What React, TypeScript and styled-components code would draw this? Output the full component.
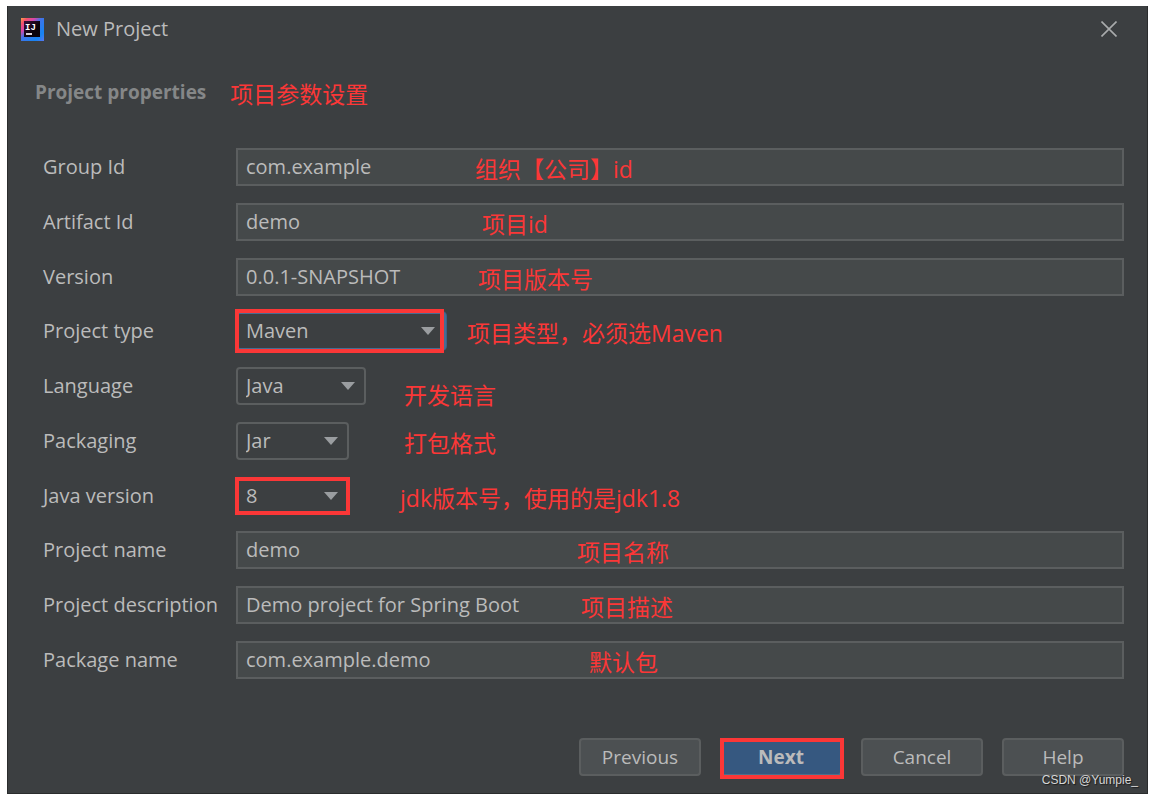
import React, { useId } from "react";
import styled, { createGlobalStyle, css } from "styled-components";

const uiFont = `"Open Sans", "Noto Sans", "Noto Sans CJK SC", sans-serif`;
const noteFont = `"Open Sans", "Noto Sans CJK SC", sans-serif`;

const GlobalStyle = createGlobalStyle`
  *, *::before, *::after { box-sizing: border-box; }
  body {
    margin: 0;
    background: #ffffff;
    color: #bbbbbb;
    font-family: ${uiFont};
    font-size: 20px;
    line-height: 26px;
  }
  button, input, select { font: inherit; color: inherit; margin: 0; }
`;

const Page = styled.div`
  display: flex;
  min-height: 100vh;
  padding: 6px 6px 3px 7px;
`;

const Dialog = styled.main`
  position: relative;
  flex: 1;
  min-width: 0;
  display: flex;
  flex-direction: column;
  background: #3c3f41;
  border: 1px solid #2a2c2d;
  border-top: 0;
`;

const TitleBar = styled.header`
  display: flex;
  align-items: center;
  gap: 12px;
  height: 46px;
  padding: 0 30px 0 13px;
`;

const Title = styled.h1`
  flex: 1;
  margin: 0;
  font-size: 20px;
  font-weight: 400;
`;

const CloseButton = styled.button`
  display: flex;
  padding: 0;
  border: 0;
  background: none;
  cursor: pointer;
`;

const Section = styled.div`
  display: flex;
  align-items: center;
  gap: 24px;
  height: 80px;
  padding-left: 27px;
`;

const SectionTitle = styled.h2`
  margin: 0;
  color: #858788;
  font-size: 19px;
  font-weight: 700;
`;

const noteText = css`
  color: #fb3737;
  font-family: ${noteFont};
  font-size: 23px;
  line-height: 32px;
  white-space: nowrap;
`;

const SectionNote = styled.span`
  ${noteText}
  padding-top: 4px;
`;

const Form = styled.form`
  flex: 1;
  display: flex;
  flex-direction: column;
`;

const Rows = styled.div`
  flex: 1;
  display: flex;
  flex-direction: column;
  justify-content: space-between;
  gap: 12px;
  padding: 16px 23px 0 35px;
`;

const Row = styled.div`
  display: grid;
  grid-template-columns: 193px minmax(0, 1fr);
  align-items: center;
`;

const Label = styled.label`
  white-space: nowrap;
`;

const Field = styled.div`
  position: relative;
  display: flex;
`;

const TextInput = styled.input`
  flex: 1;
  min-width: 0;
  height: 38px;
  padding: 0 8px 1px;
  border: 2px solid #5b5e5f;
  border-radius: 0;
  background: #45494a;
  outline: 0;
`;

const SelectBox = styled.div<{ $width: number }>`
  position: relative;
  width: ${(p) => p.$width}px;
`;

const Select = styled.select<{ $focused?: boolean }>`
  appearance: none;
  display: block;
  width: 100%;
  height: 38px;
  padding: 0 32px 0 8px;
  border: 2px solid ${(p) => (p.$focused ? "#466d94" : "#5b5e5f")};
  border-radius: 4px;
  background: #3c3f41;
  box-shadow: ${(p) => (p.$focused ? "0 0 0 1px #3d6185" : "none")};
  outline: 0;
`;

const Arrow = styled.svg`
  position: absolute;
  right: 11px;
  top: 15px;
  pointer-events: none;
`;

const Marker = styled.span<{ $inset: string }>`
  position: absolute;
  inset: ${(p) => p.$inset};
  border: 4px solid #fb3737;
  pointer-events: none;
`;

const Note = styled.span<{ $left: number; $top?: number }>`
  ${noteText}
  position: absolute;
  left: ${(p) => p.$left}px;
  top: ${(p) => p.$top ?? 5}px;
  pointer-events: none;
`;

const Footer = styled.footer`
  display: flex;
  justify-content: flex-end;
  gap: 19px;
  padding: 59px 23px 17px;
`;

const Button = styled.button<{ $primary?: boolean }>`
  position: relative;
  width: 122px;
  height: 38px;
  padding: 0;
  border: 2px solid ${(p) => (p.$primary ? "#4c708c" : "#5b5e5f")};
  border-radius: 4px;
  background: ${(p) => (p.$primary ? "#365880" : "#4c5052")};
  font-size: 19px;
  font-weight: ${(p) => (p.$primary ? 700 : 400)};
  cursor: pointer;
`;

const Watermark = styled.span`
  position: absolute;
  right: 9px;
  bottom: 4px;
  color: #d6d6d6;
  font-family: "Liberation Sans", sans-serif;
  font-size: 12px;
  line-height: 18px;
  text-shadow: 1px 1px 1px #1d1d1d;
  pointer-events: none;
`;

function Logo() {
  return (
    <svg width="23" height="23" viewBox="0 0 23 23" aria-hidden="true">
      <defs>
        <linearGradient id="logo-edge" x1="0" y1="0" x2="1" y2="1">
          <stop offset="0" stopColor="#fba24a" />
          <stop offset="0.14" stopColor="#f5506a" />
          <stop offset="0.3" stopColor="#d846a8" />
          <stop offset="0.46" stopColor="#3f74e8" />
          <stop offset="0.8" stopColor="#1684f2" />
          <stop offset="1" stopColor="#5a76f0" />
        </linearGradient>
        <linearGradient id="logo-core" x1="0" y1="0" x2="1" y2="1">
          <stop offset="0" stopColor="#3a0f3c" />
          <stop offset="0.6" stopColor="#0b0309" />
        </linearGradient>
      </defs>
      <rect width="23" height="23" fill="url(#logo-edge)" />
      <rect x="3" y="3" width="16" height="16" fill="url(#logo-core)" />
      <text x="4" y="12" fill="#ffffff" fontFamily="Liberation Mono, monospace" fontSize="9" fontWeight="700">
        IJ
      </text>
      <rect x="5" y="15" width="6" height="2" fill="#d8d0d8" />
    </svg>
  );
}

type FieldSpec = {
  label: string;
  value: string;
  note: string;
  noteLeft: number;
  noteTop?: number;
  selectWidth?: number;
  focused?: boolean;
  marker?: string;
};

const fields: FieldSpec[] = [
  { label: "Group Id", value: "com.example", note: "组织【公司】id", noteLeft: 239 },
  { label: "Artifact Id", value: "demo", note: "项目id", noteLeft: 246 },
  { label: "Version", value: "0.0.1-SNAPSHOT", note: "项目版本号", noteLeft: 242 },
  { label: "Project type", value: "Maven", note: "项目类型，必须选Maven", noteLeft: 231, selectWidth: 210, focused: true, marker: "-3px 2px -3px -1px" },
  { label: "Language", value: "Java", note: "开发语言", noteLeft: 168, noteTop: 12, selectWidth: 130 },
  { label: "Packaging", value: "Jar", note: "打包格式", noteLeft: 168, selectWidth: 113 },
  { label: "Java version", value: "8", note: "jdk版本号，使用的是jdk1.8", noteLeft: 164, selectWidth: 113, marker: "0 -1px" },
  { label: "Project name", value: "demo", note: "项目名称", noteLeft: 341 },
  { label: "Project description", value: "Demo project for Spring Boot", note: "项目描述", noteLeft: 345 },
  { label: "Package name", value: "com.example.demo", note: "默认包", noteLeft: 353 },
];

function FieldRow({ field }: { field: FieldSpec }) {
  const id = useId();
  return (
    <Row>
      <Label htmlFor={id}>{field.label}</Label>
      <Field>
        {field.selectWidth ? (
          <SelectBox $width={field.selectWidth}>
            <Select id={id} $focused={field.focused} defaultValue={field.value}>
              <option>{field.value}</option>
            </Select>
            <Arrow width="14" height="8" viewBox="0 0 14 8" aria-hidden="true">
              <path d="M0 0H14L7 8Z" fill="#9a9da0" />
            </Arrow>
            {field.marker && <Marker $inset={field.marker} />}
          </SelectBox>
        ) : (
          <TextInput id={id} type="text" defaultValue={field.value} spellCheck={false} />
        )}
        <Note $left={field.noteLeft} $top={field.noteTop}>
          {field.note}
        </Note>
      </Field>
    </Row>
  );
}

export default function App() {
  return (
    <>
      <GlobalStyle />
      <Page>
        <Dialog>
          <TitleBar>
            <Logo />
            <Title>New Project</Title>
            <CloseButton type="button" aria-label="Close">
              <svg width="16" height="16" viewBox="0 0 16 16" aria-hidden="true">
                <path d="M0.5 0.5L15.5 15.5M15.5 0.5L0.5 15.5" stroke="#a9abac" strokeWidth="1.6" fill="none" />
              </svg>
            </CloseButton>
          </TitleBar>
          <Section>
            <SectionTitle>Project properties</SectionTitle>
            <SectionNote>项目参数设置</SectionNote>
          </Section>
          <Form onSubmit={(e) => e.preventDefault()}>
            <Rows>
              {fields.map((field) => (
                <FieldRow key={field.label} field={field} />
              ))}
            </Rows>
            <Footer>
              <Button type="button">Previous</Button>
              <Button type="submit" $primary>
                Next
                <Marker $inset="-2px -4px -5px -2px" />
              </Button>
              <Button type="button">Cancel</Button>
              <Button type="button">Help</Button>
            </Footer>
          </Form>
          <Watermark>CSDN @Yumpie_</Watermark>
        </Dialog>
      </Page>
    </>
  );
}
